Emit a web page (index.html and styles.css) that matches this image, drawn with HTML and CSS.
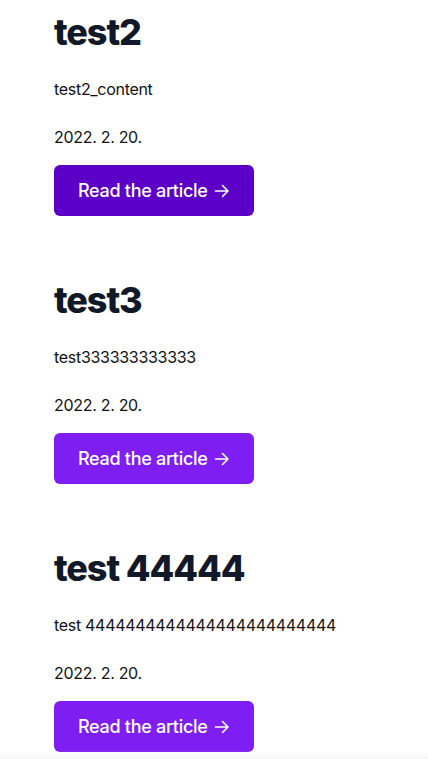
FILE: index.html
```html
<!DOCTYPE html>
<html>
<head>
<meta charset="utf-8">
<link rel="stylesheet" href="styles.css">
</head>
<body>
<main class="list">
  <article class="post">
    <h2 class="title">test2</h2>
    <p class="excerpt">test2_content</p>
    <p class="date">2022. 2. 20.</p>
    <a class="btn btn-active" href="#">Read the article <svg class="arrow" viewBox="0 0 16 16" width="16" height="16"><path d="M1.5 8h12.5M8.5 2.5L14 8l-5.5 5.5" fill="none" stroke="currentColor" stroke-width="1.6" stroke-linecap="round" stroke-linejoin="round"/></svg></a>
  </article>
  <article class="post">
    <h2 class="title">test3</h2>
    <p class="excerpt">test333333333333</p>
    <p class="date">2022. 2. 20.</p>
    <a class="btn" href="#">Read the article <svg class="arrow" viewBox="0 0 16 16" width="16" height="16"><path d="M1.5 8h12.5M8.5 2.5L14 8l-5.5 5.5" fill="none" stroke="currentColor" stroke-width="1.6" stroke-linecap="round" stroke-linejoin="round"/></svg></a>
  </article>
  <article class="post">
    <h2 class="title">test 44444</h2>
    <p class="excerpt">test 4444444444444444444444444</p>
    <p class="date">2022. 2. 20.</p>
    <a class="btn" href="#">Read the article <svg class="arrow" viewBox="0 0 16 16" width="16" height="16"><path d="M1.5 8h12.5M8.5 2.5L14 8l-5.5 5.5" fill="none" stroke="currentColor" stroke-width="1.6" stroke-linecap="round" stroke-linejoin="round"/></svg></a>
  </article>
</main>
<div class="bottom-fade"></div>
</body>
</html>
```
FILE: styles.css
```css
html, body {
  margin: 0;
  padding: 0;
  background: #ffffff;
}
body {
  font-family: Inter, "Noto Sans", sans-serif;
  color: #111111;
}
.list {
  padding: 12px 24px 0 54px;
  display: flex;
  flex-direction: column;
  gap: 64px;
}
.post {
  display: flex;
  flex-direction: column;
  align-items: flex-start;
}
.title {
  margin: 0;
  font-size: 36px;
  line-height: 40px;
  font-weight: 800;
  letter-spacing: -0.03em;
  color: #111827;
}
.excerpt {
  margin: 25px 0 0;
  font-size: 16px;
  line-height: 24px;
  letter-spacing: -0.3px;
}
.date {
  margin: 24px 0 0;
  font-size: 16px;
  line-height: 24px;
  letter-spacing: -0.3px;
}
.btn {
  margin-top: 16px;
  display: inline-flex;
  align-items: center;
  gap: 6px;
  padding: 12px 24px;
  font-size: 18px;
  line-height: 27px;
  font-weight: 500;
  letter-spacing: -0.3px;
  color: #ffffff;
  text-decoration: none;
  background: #7e1ef2;
  border-radius: 6px;
}
.btn-active {
  background: #5c00c8;
}
.arrow {
  display: block;
}
.bottom-fade {
  position: fixed;
  left: 0;
  right: 0;
  bottom: 0;
  height: 8px;
  background: linear-gradient(to bottom, rgba(245,245,245,0), #f4f4f4);
}
```
